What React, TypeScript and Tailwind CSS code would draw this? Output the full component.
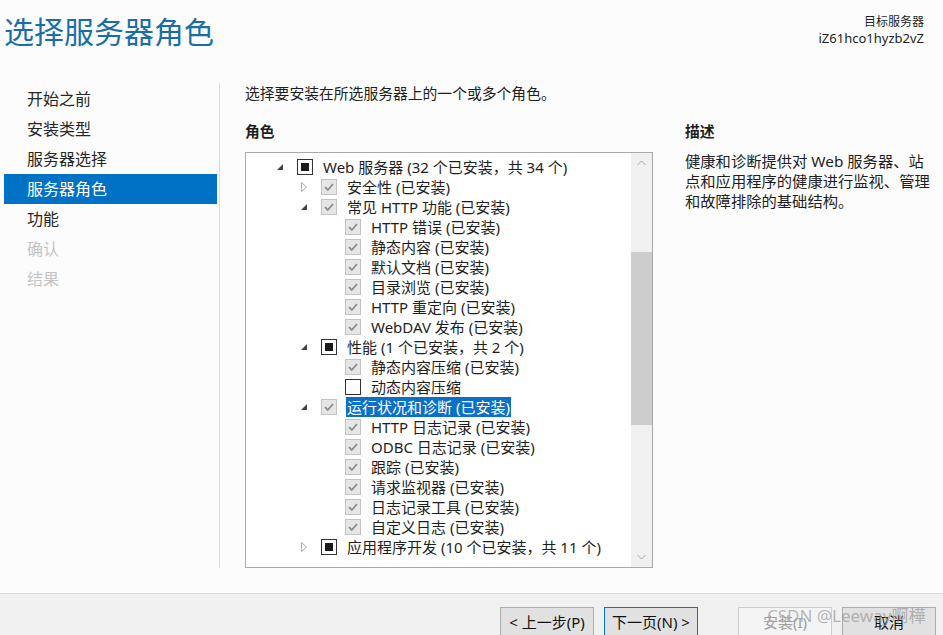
import React from "react";

type Row = {
  level: 0 | 1 | 2;
  toggle?: "open" | "closed";
  check: "done" | "part" | "none";
  text: string;
  selected?: boolean;
};

const rows: Row[] = [
  { level: 0, toggle: "open", check: "part", text: "Web 服务器 (32 个已安装，共 34 个)" },
  { level: 1, toggle: "closed", check: "done", text: "安全性 (已安装)" },
  { level: 1, toggle: "open", check: "done", text: "常见 HTTP 功能 (已安装)" },
  { level: 2, check: "done", text: "HTTP 错误 (已安装)" },
  { level: 2, check: "done", text: "静态内容 (已安装)" },
  { level: 2, check: "done", text: "默认文档 (已安装)" },
  { level: 2, check: "done", text: "目录浏览 (已安装)" },
  { level: 2, check: "done", text: "HTTP 重定向 (已安装)" },
  { level: 2, check: "done", text: "WebDAV 发布 (已安装)" },
  { level: 1, toggle: "open", check: "part", text: "性能 (1 个已安装，共 2 个)" },
  { level: 2, check: "done", text: "静态内容压缩 (已安装)" },
  { level: 2, check: "none", text: "动态内容压缩" },
  { level: 1, toggle: "open", check: "done", text: "运行状况和诊断 (已安装)", selected: true },
  { level: 2, check: "done", text: "HTTP 日志记录 (已安装)" },
  { level: 2, check: "done", text: "ODBC 日志记录 (已安装)" },
  { level: 2, check: "done", text: "跟踪 (已安装)" },
  { level: 2, check: "done", text: "请求监视器 (已安装)" },
  { level: 2, check: "done", text: "日志记录工具 (已安装)" },
  { level: 2, check: "done", text: "自定义日志 (已安装)" },
  { level: 1, toggle: "closed", check: "part", text: "应用程序开发 (10 个已安装，共 11 个)" },
];

const indent = ["pl-[28px]", "pl-[52px]", "pl-[76px]"];

const steps = [
  { label: "开始之前" },
  { label: "安装类型" },
  { label: "服务器选择" },
  { label: "服务器角色", active: true },
  { label: "功能" },
  { label: "确认", disabled: true },
  { label: "结果", disabled: true },
];

function Toggle({ kind }: { kind?: "open" | "closed" }) {
  if (kind === "open") {
    return (
      <svg width="8" height="8" viewBox="0 0 8 8" className="ml-[2px]">
        <polygon points="7,1 7,7 1,7" fill="#444" />
      </svg>
    );
  }
  if (kind === "closed") {
    return (
      <svg width="7" height="10" viewBox="0 0 7 10" className="ml-[3px]">
        <polygon points="0.5,0.5 5.5,5 0.5,9.5" fill="none" stroke="#a8a8a8" />
      </svg>
    );
  }
  return null;
}

function Check({ kind }: { kind: Row["check"] }) {
  if (kind === "done") {
    return (
      <div className="w-[16px] h-[16px] border border-[#c2c2c2] bg-[#e6e6e6] flex items-center justify-center shrink-0">
        <svg width="12" height="12" viewBox="0 0 12 12">
          <path d="M2 6.2 L4.8 9 L10 3" fill="none" stroke="#8c8c8c" strokeWidth="1.8" />
        </svg>
      </div>
    );
  }
  if (kind === "part") {
    return (
      <div className="w-[16px] h-[16px] border border-[#333] bg-white flex items-center justify-center shrink-0">
        <div className="w-[8px] h-[8px] bg-[#1a1a1a]" />
      </div>
    );
  }
  return <div className="w-[16px] h-[16px] border border-[#333] bg-white shrink-0" />;
}

function Chevron({ up }: { up?: boolean }) {
  return (
    <svg width="9" height="6" viewBox="0 0 9 6">
      <polyline
        points={up ? "0.5,5 4.5,1 8.5,5" : "0.5,1 4.5,5 8.5,1"}
        fill="none"
        stroke="#a6a6a6"
        strokeWidth="1"
      />
    </svg>
  );
}

function Button({ children, variant }: { children: React.ReactNode; variant?: "default" | "disabled" }) {
  const look =
    variant === "default"
      ? "border-[#0078d7] bg-[#e1e1e1] text-[#111]"
      : variant === "disabled"
      ? "border-[#cccccc] bg-[#f4f4f4] text-[#a0a0a0]"
      : "border-[#adadad] bg-[#e1e1e1] text-[#111]";
  return (
    <div className={`w-[94px] h-[30px] border flex items-center justify-center text-[15px] ${look}`}>
      {children}
    </div>
  );
}

export default function App() {
  return (
    <div className="w-[943px] h-[635px] bg-[#fcfcfc] flex flex-col overflow-hidden relative font-['Noto_Sans','Noto_Sans_CJK_SC',sans-serif] text-[#1e1e1e]">
      <header className="h-[83px] flex justify-between shrink-0">
        <h1 className="pl-[4px] pt-[13px] text-[30px] leading-[38px] text-[#1a6ea6] font-normal">选择服务器角色</h1>
        <div className="pt-[13px] pr-[19px] text-right">
          <div className="text-[12px] leading-[17px]">目标服务器</div>
          <div className="text-[13px] leading-[16px]">iZ61hco1hyzb2vZ</div>
        </div>
      </header>

      <div className="h-[510px] flex pb-[25px] shrink-0">
        <nav className="w-[220px] pl-[4px] pr-[2px] pt-[1px] border-r border-[#dcdcdc] flex flex-col">
          {steps.map((s) => (
            <div
              key={s.label}
              className={`h-[30px] flex items-center pl-[23px] text-[16px] ${
                s.active ? "bg-[#0072c6] text-white" : s.disabled ? "text-[#c4c4c4]" : "text-[#262626]"
              }`}
            >
              {s.label}
            </div>
          ))}
        </nav>

        <main className="pl-[25px] flex flex-col">
          <p className="text-[14.8px] leading-[20px]">选择要安装在所选服务器上的一个或多个角色。</p>
          <div className="flex gap-[32px] mt-[18px]">
            <section className="w-[408px] flex flex-col">
              <h2 className="text-[14.8px] leading-[20px] font-bold">角色</h2>
              <div className="mt-[11px] h-[416px] border border-[#a9a9a9] bg-white flex">
                <div className="flex-1 pt-[4px] flex flex-col">
                  {rows.map((r, i) => (
                    <div key={i} className={`h-[20px] flex items-center ${indent[r.level]}`}>
                      <div className="w-[23px] flex items-center">
                        <Toggle kind={r.toggle} />
                      </div>
                      <Check kind={r.check} />
                      <span
                        className={`ml-[9px] text-[15px] leading-[20px] whitespace-nowrap px-[1px] ${
                          r.selected ? "bg-[#0a70c8] text-white" : ""
                        }`}
                      >
                        {r.text}
                      </span>
                    </div>
                  ))}
                </div>
                <div className="w-[21px] bg-[#f0f0f0] flex flex-col">
                  <div className="h-[20px] flex items-center justify-center">
                    <Chevron up />
                  </div>
                  <div className="h-[79px]" />
                  <div className="h-[173px] bg-[#cdcdcd]" />
                  <div className="flex-1" />
                  <div className="h-[20px] flex items-center justify-center">
                    <Chevron />
                  </div>
                </div>
              </div>
            </section>

            <section className="w-[250px]">
              <h2 className="text-[14.8px] leading-[20px] font-bold">描述</h2>
              <p className="mt-[10px] text-[15.3px] leading-[20px] whitespace-nowrap">
                健康和诊断提供对 Web 服务器、站
                <br />
                点和应用程序的健康进行监视、管理
                <br />
                和故障排除的基础结构。
              </p>
            </section>
          </div>
        </main>
      </div>

      <footer className="flex-1 bg-[#f0f0f0] border-t border-[#dadada] flex items-start justify-end pt-[13px] pr-[7px]">
        <div className="flex gap-[10px]">
          <Button>&lt; 上一步(P)</Button>
          <Button variant="default">下一页(N) &gt;</Button>
        </div>
        <div className="flex gap-[10px] ml-[40px]">
          <Button variant="disabled">安装(I)</Button>
          <Button>取消</Button>
        </div>
      </footer>

      <div className="absolute left-[767px] top-[604px] text-[17px] leading-[24px] text-[#9a9a9a]/70 whitespace-nowrap">
        CSDN @Leeway啊樺
      </div>
    </div>
  );
}
